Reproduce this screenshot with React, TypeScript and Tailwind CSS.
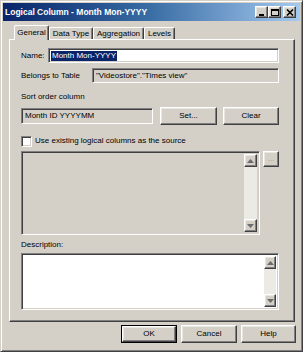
import React from 'react'

const sunken =
  'border border-t-[#808080] border-l-[#808080] border-r-white border-b-white shadow-[inset_1px_1px_0_#404040,inset_-1px_-1px_0_#d4d0c8]'
const raised =
  'border border-t-white border-l-white border-r-[#404040] border-b-[#404040] shadow-[inset_-1px_-1px_0_#808080,inset_1px_1px_0_#e8e6e0]'

function Arrow({ down }: { down?: boolean }) {
  return (
    <div className={`h-[13px] w-full shrink-0 bg-[#d4d0c8] flex items-center justify-center ${raised}`}>
      <svg width="7" height="4" viewBox="0 0 7 4">
        {down
          ? <polygon points="0,0 7,0 3.5,4" fill="#6b6b6b" />
          : <polygon points="0,4 7,4 3.5,0" fill="#6b6b6b" />}
      </svg>
    </div>
  )
}

function ScrollBar({ width }: { width: string }) {
  return (
    <div className={`${width} h-full flex flex-col bg-[#ebeae4]`}>
      <Arrow />
      <div className="flex-1" />
      <Arrow down />
    </div>
  )
}

function Btn({ label, w, def }: { label: string; w: string; def?: boolean }) {
  return (
    <div className={`${w} h-[18px] ${def ? 'border border-black' : ''}`}>
      <div className={`h-full w-full bg-[#d4d0c8] flex items-center justify-center text-[8px] text-black ${raised}`}>
        {label}
      </div>
    </div>
  )
}

function CapBtn({ kind }: { kind: 'min' | 'max' | 'close' }) {
  return (
    <div className={`h-[12px] w-[13px] bg-[#d4d0c8] flex items-center justify-center ${raised}`}>
      <svg width="8" height="7" viewBox="0 0 8 7">
        {kind === 'min' && <rect x="1" y="5" width="5" height="2" fill="#000" />}
        {kind === 'max' && (
          <>
            <rect x="0.5" y="0.5" width="7" height="6" fill="none" stroke="#000" />
            <rect x="0" y="0" width="8" height="2" fill="#000" />
          </>
        )}
        {kind === 'close' && (
          <path d="M1 0.5 L7 6.5 M7 0.5 L1 6.5" stroke="#000" strokeWidth="1.6" />
        )}
      </svg>
    </div>
  )
}

export default function App() {
  const tabs = [
    { name: 'Data Type', w: 'w-[44px]' },
    { name: 'Aggregation', w: 'w-[51px]' },
    { name: 'Levels', w: 'w-[31px]' },
  ]

  return (
    <div className="w-[305px] h-[353px] bg-white font-['Liberation_Sans',Arial,sans-serif] text-black">
      <div className="w-[303px] h-[352px] bg-[#d4d0c8] border border-t-[#d4d0c8] border-l-[#d4d0c8] border-r-[#404040] border-b-[#404040] shadow-[inset_1px_1px_0_#fff,inset_-1px_-1px_0_#808080] p-[2px] flex flex-col">

        {/* Title bar */}
        <div className="h-[18px] flex items-center justify-between pl-[2px] pr-[4px] bg-gradient-to-r from-[#0a246a] via-[#3a6ea5] to-[#a6caf0]">
          <span className="text-white font-bold text-[8.5px] leading-none">Logical Column - Month Mon-YYYY</span>
          <div className="flex items-center">
            <CapBtn kind="min" />
            <CapBtn kind="max" />
            <div className="w-[2px]" />
            <CapBtn kind="close" />
          </div>
        </div>

        {/* Tabs */}
        <div className="mt-[4px] ml-[11px] h-[14px] flex items-end text-[8px] leading-none">
          <div className="relative z-10 -mb-px h-[15px] w-[35px] bg-[#d4d0c8] border-t border-l border-t-white border-l-white border-r border-r-[#404040] rounded-t-[2px] shadow-[inset_-1px_0_0_#808080] flex items-center justify-center">
            General
          </div>
          {tabs.map(t => (
            <div
              key={t.name}
              className={`${t.w} h-[12px] bg-[#d4d0c8] border-t border-l border-t-white border-l-white border-r border-r-[#404040] rounded-t-[2px] shadow-[inset_-1px_0_0_#808080] flex items-center justify-center`}
            >
              {t.name}
            </div>
          ))}
        </div>

        {/* Panel */}
        <div className="ml-[6px] w-[286px] h-[283px] border border-t-white border-l-white border-r-[#404040] border-b-[#404040] shadow-[inset_-1px_-1px_0_#808080] pl-[11px] text-[8px] leading-none flex flex-col">

          <div className="mt-[8px] h-[15px] flex items-center">
            <span className="w-[27px]">Name:</span>
            <div className={`w-[231px] h-[15px] bg-white flex items-center pl-[2px] ${sunken}`}>
              <span className="bg-[#0a246a] text-white px-px py-[1px]">Month Mon-YYYY</span>
            </div>
          </div>

          <div className="mt-[5px] h-[15px] flex items-center">
            <span className="w-[71px]">Belongs to Table</span>
            <div className={`w-[187px] h-[15px] flex items-center pl-[3px] ${sunken}`}>
              "Videostore"."Times view"
            </div>
          </div>

          <div className="mt-[9px] h-[10px] flex items-center">Sort order column</div>

          <div className="mt-[5px] h-[18px] flex items-center">
            <div className={`w-[132px] h-[16px] flex items-center pl-[3px] ${sunken}`}>Month ID YYYYMM</div>
            <div className="ml-[7px]"><Btn label="Set..." w="w-[57px]" /></div>
            <div className="ml-[6px]"><Btn label="Clear" w="w-[56px]" /></div>
          </div>

          <div className="mt-[10px] h-[12px] flex items-center">
            <div className={`w-[11px] h-[11px] bg-white ${sunken}`} />
            <span className="ml-[3px]">Use existing logical columns as the source</span>
          </div>

          <div className="mt-[4px] flex items-start">
            <div className={`w-[239px] h-[84px] flex justify-end p-[2px] ${sunken}`}>
              <ScrollBar width="w-[13px]" />
            </div>
            <div className={`ml-[3px] w-[16px] h-[16px] bg-[#d4d0c8] flex items-center justify-center text-[8px] leading-none text-[#a19e96] ${raised}`}>
              ...
            </div>
          </div>

          <div className="mt-[5px] h-[10px] flex items-center">Description:</div>

          <div className={`mt-[3px] w-[258px] h-[57px] bg-white flex justify-end p-[2px] ${sunken}`}>
            <ScrollBar width="w-[12px]" />
          </div>
        </div>

        {/* Dialog buttons */}
        <div className="mt-[3px] pr-[4px] flex justify-end gap-[4px]">
          <Btn label="OK" w="w-[56px]" def />
          <Btn label="Cancel" w="w-[56px]" />
          <Btn label="Help" w="w-[55px]" />
        </div>
      </div>
    </div>
  )
}
